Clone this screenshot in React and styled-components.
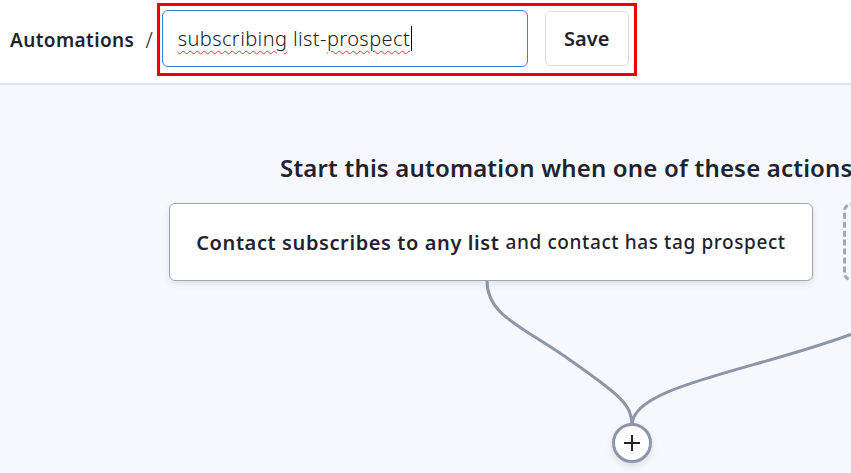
import React from 'react';
import styled, { createGlobalStyle } from 'styled-components';

const GlobalStyle = createGlobalStyle`
  * { box-sizing: border-box; }
  html, body { margin: 0; padding: 0; }
  body {
    font-family: "Noto Sans", "Liberation Sans", sans-serif;
    color: #1f232d;
    background: #f7f8fd;
    overflow: hidden;
  }
`;

const Page = styled.div`
  width: 851px;
  height: 473px;
  display: flex;
  flex-direction: column;
  overflow: hidden;
`;

const Header = styled.header`
  height: 85px;
  flex-shrink: 0;
  background: #fff;
  border-bottom: 2px solid #dfe2ea;
  display: flex;
  align-items: center;
  padding: 0 0 4px 10px;
`;

const Crumb = styled.span`
  font-size: 19px;
  font-weight: 600;
  letter-spacing: 0.4px;
`;

const Slash = styled.span`
  font-size: 21px;
  font-weight: 300;
  margin: 0 4px 0 11px;
`;

const Highlight = styled.div`
  display: flex;
  align-items: center;
  gap: 17px;
  border: 3px solid #ee0000;
  padding: 4px 5px 6px 2px;
`;

const NameField = styled.div`
  width: 366px;
  height: 57px;
  border: 1px solid #3b7be8;
  border-radius: 6px;
  background: #fff;
  display: flex;
  align-items: center;
  padding: 0 15px;
  font-size: 20px;
  font-weight: 300;
  letter-spacing: 0.4px;
  color: #1a1d26;
  white-space: nowrap;
`;

const Misspelled = styled.span`
  text-decoration: underline wavy #e53935;
  text-decoration-thickness: 1px;
  text-underline-offset: 4px;
`;

const Caret = styled.span`
  display: inline-block;
  width: 1px;
  height: 25px;
  background: #000;
  margin-left: 1px;
  vertical-align: middle;
`;

const SaveButton = styled.button`
  width: 84px;
  height: 55px;
  border: 1px solid #dcdfe7;
  border-radius: 5px;
  background: #fff;
  font-family: inherit;
  font-size: 20px;
  font-weight: 600;
  color: #1f232d;
`;

const Canvas = styled.main`
  position: relative;
  flex: 1;
  background: #f7f8fd;
  overflow: hidden;
`;

const Heading = styled.h2`
  margin: 67px 0 0 280px;
  font-size: 24px;
  font-weight: 600;
  letter-spacing: 0.18px;
  white-space: nowrap;
  line-height: 32px;
`;

const TriggerRow = styled.div`
  display: flex;
  gap: 30px;
  margin: 19px 0 0 169px;
`;

const TriggerCard = styled.div`
  flex-shrink: 0;
  width: 644px;
  height: 78px;
  background: #fff;
  border: 1px solid #9ea3b6;
  border-radius: 6px;
  box-shadow: 0 3px 6px rgba(60, 70, 100, 0.12);
  display: flex;
  align-items: center;
  justify-content: center;
  font-size: 20px;
  letter-spacing: 0.6px;
  white-space: nowrap;
`;

const Strong = styled.span`
  font-weight: 600;
`;

const Soft = styled.span`
  font-weight: 500;
  font-size: 19px;
  margin-left: 6px;
`;

const EmptyTrigger = styled.div`
  flex-shrink: 0;
  width: 300px;
  height: 78px;
  border: 3px dashed #a3a8b9;
  border-radius: 8px;
`;

const Edges = styled.svg`
  position: absolute;
  left: 0;
  top: 0;
  pointer-events: none;
`;

const AddNode = styled.button`
  position: absolute;
  left: 612px;
  top: 338px;
  width: 40px;
  height: 40px;
  border-radius: 50%;
  border: 3px solid #8f95a9;
  background: #fff;
  box-shadow: 0 3px 6px rgba(60, 70, 100, 0.15);
  display: flex;
  align-items: center;
  justify-content: center;
  padding: 0;
`;

export default function App() {
  return (
    <>
      <GlobalStyle />
      <Page>
        <Header>
          <Crumb>Automations</Crumb>
          <Slash>/</Slash>
          <Highlight>
            <NameField>
              <Misspelled>subscribing</Misspelled>&nbsp;list-<Misspelled>prospect</Misspelled>
              <Caret />
            </NameField>
            <SaveButton>Save</SaveButton>
          </Highlight>
        </Header>
        <Canvas>
          <Heading>Start this automation when one of these actions take place</Heading>
          <TriggerRow>
            <TriggerCard>
              <Strong>Contact subscribes to any list</Strong>
              <Soft>and contact has tag prospect</Soft>
            </TriggerCard>
            <EmptyTrigger />
          </TriggerRow>
          <Edges width="851" height="388" viewBox="0 0 851 388">
            <path
              d="M487 196 C 487 230, 520 240, 570 275 S 632 320, 632 340"
              fill="none"
              stroke="#8f95a9"
              strokeWidth="3"
            />
            <path
              d="M860 246 C 760 285, 632 300, 632 340"
              fill="none"
              stroke="#8f95a9"
              strokeWidth="3"
            />
          </Edges>
          <AddNode>
            <svg width="20" height="20" viewBox="0 0 20 20">
              <path d="M10 2 V18 M2 10 H18" stroke="#1f232d" strokeWidth="2" />
            </svg>
          </AddNode>
        </Canvas>
      </Page>
    </>
  );
}
